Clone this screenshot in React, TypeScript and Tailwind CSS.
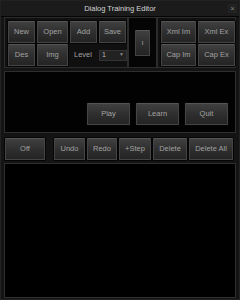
import React from 'react';

const btn =
  'flex items-center justify-center border border-[#444] border-t-[#555] bg-gradient-to-b from-[#404040] via-[#2f2f2f] to-[#242424] text-[#a2a2a2] text-[7.5px] leading-none rounded-[1px] shadow-[0_0_0_1px_#050505]';

function Btn({ label, className }: { label: string; className: string }) {
  return <div className={`${btn} ${className}`}>{label}</div>;
}

export default function App() {
  return (
    <div
      className="w-[240px] h-[300px] bg-[#141414] flex flex-col border border-[#222] overflow-hidden"
      style={{ fontFamily: '"Liberation Sans", Arial, sans-serif' }}
    >
      {/* title bar */}
      <div className="h-[16px] shrink-0 relative flex items-center justify-center bg-[#1b1b1b] border-b border-[#050505]">
        <span className="text-[7.5px] text-[#d4d4d4]">Dialog Training Editor</span>
        <span className="absolute right-[2px] top-[3px] w-[9px] h-[9px] flex items-center justify-center bg-[#222] text-[7px] leading-none text-[#8a8a8a]">
          ×
        </span>
      </div>

      <div className="flex flex-col px-[3px] pb-[3px]">
        {/* top section */}
        <div className="flex h-[51px]">
          <div className="w-[125px] border border-[#2c2c2c] bg-[#101010] pl-[3px] pt-[3px] flex flex-col gap-[1px]">
            <div className="flex gap-[2px]">
              <Btn label="New" className="w-[27px] h-[22px]" />
              <Btn label="Open" className="w-[31px] h-[22px]" />
              <Btn label="Add" className="w-[27px] h-[22px]" />
              <Btn label="Save" className="w-[27px] h-[22px]" />
            </div>
            <div className="flex gap-[2px] items-center">
              <Btn label="Des" className="w-[27px] h-[22px]" />
              <Btn label="Img" className="w-[31px] h-[22px]" />
              <span className="w-[27px] text-[7.5px] text-[#a2a2a2] pl-[4px]">Level</span>
              <div className="w-[28px] h-[11px] bg-[#222] border border-[#333] flex items-center justify-between px-[2px] text-[7px] text-[#b8b8b8]">
                <span>1</span>
                <span className="text-[5px] text-[#888]">▼</span>
              </div>
            </div>
          </div>
          <div className="w-[29px] border border-[#2c2c2c] bg-[#050505] flex items-center justify-center">
            <Btn label="ı" className="w-[15px] h-[26px]" />
          </div>
          <div className="flex-1 border border-[#2c2c2c] bg-[#101010] pl-[3px] pt-[3px] flex flex-col gap-[1px]">
            <div className="flex gap-[2px]">
              <Btn label="Xml Im" className="w-[35px] h-[22px]" />
              <Btn label="Xml Ex" className="w-[37px] h-[22px]" />
            </div>
            <div className="flex gap-[2px]">
              <Btn label="Cap Im" className="w-[35px] h-[22px]" />
              <Btn label="Cap Ex" className="w-[37px] h-[22px]" />
            </div>
          </div>
        </div>

        {/* play panel */}
        <div className="mt-[3px] h-[62px] border border-[#2e2e2e] bg-[#020202] flex items-end justify-end gap-[6px] pr-[7px] pb-[7px]">
          <Btn label="Play" className="w-[43px] h-[22px]" />
          <Btn label="Learn" className="w-[43px] h-[22px]" />
          <Btn label="Quit" className="w-[43px] h-[22px]" />
        </div>

        {/* step row */}
        <div className="mt-[3px] h-[25px] flex items-center pl-[1px]">
          <Btn label="Off" className="w-[40px] h-[22px]" />
          <div className="w-[9px]" />
          <div className="flex gap-[2px]">
            <Btn label="Undo" className="w-[31px] h-[22px]" />
            <Btn label="Redo" className="w-[30px] h-[22px]" />
            <Btn label="+Step" className="w-[32px] h-[22px]" />
            <Btn label="Delete" className="w-[34px] h-[22px]" />
            <Btn label="Delete All" className="w-[44px] h-[22px]" />
          </div>
        </div>

        {/* list panel */}
        <div className="mt-[2px] h-[135px] border border-[#2e2e2e] bg-black" />
      </div>
    </div>
  );
}
